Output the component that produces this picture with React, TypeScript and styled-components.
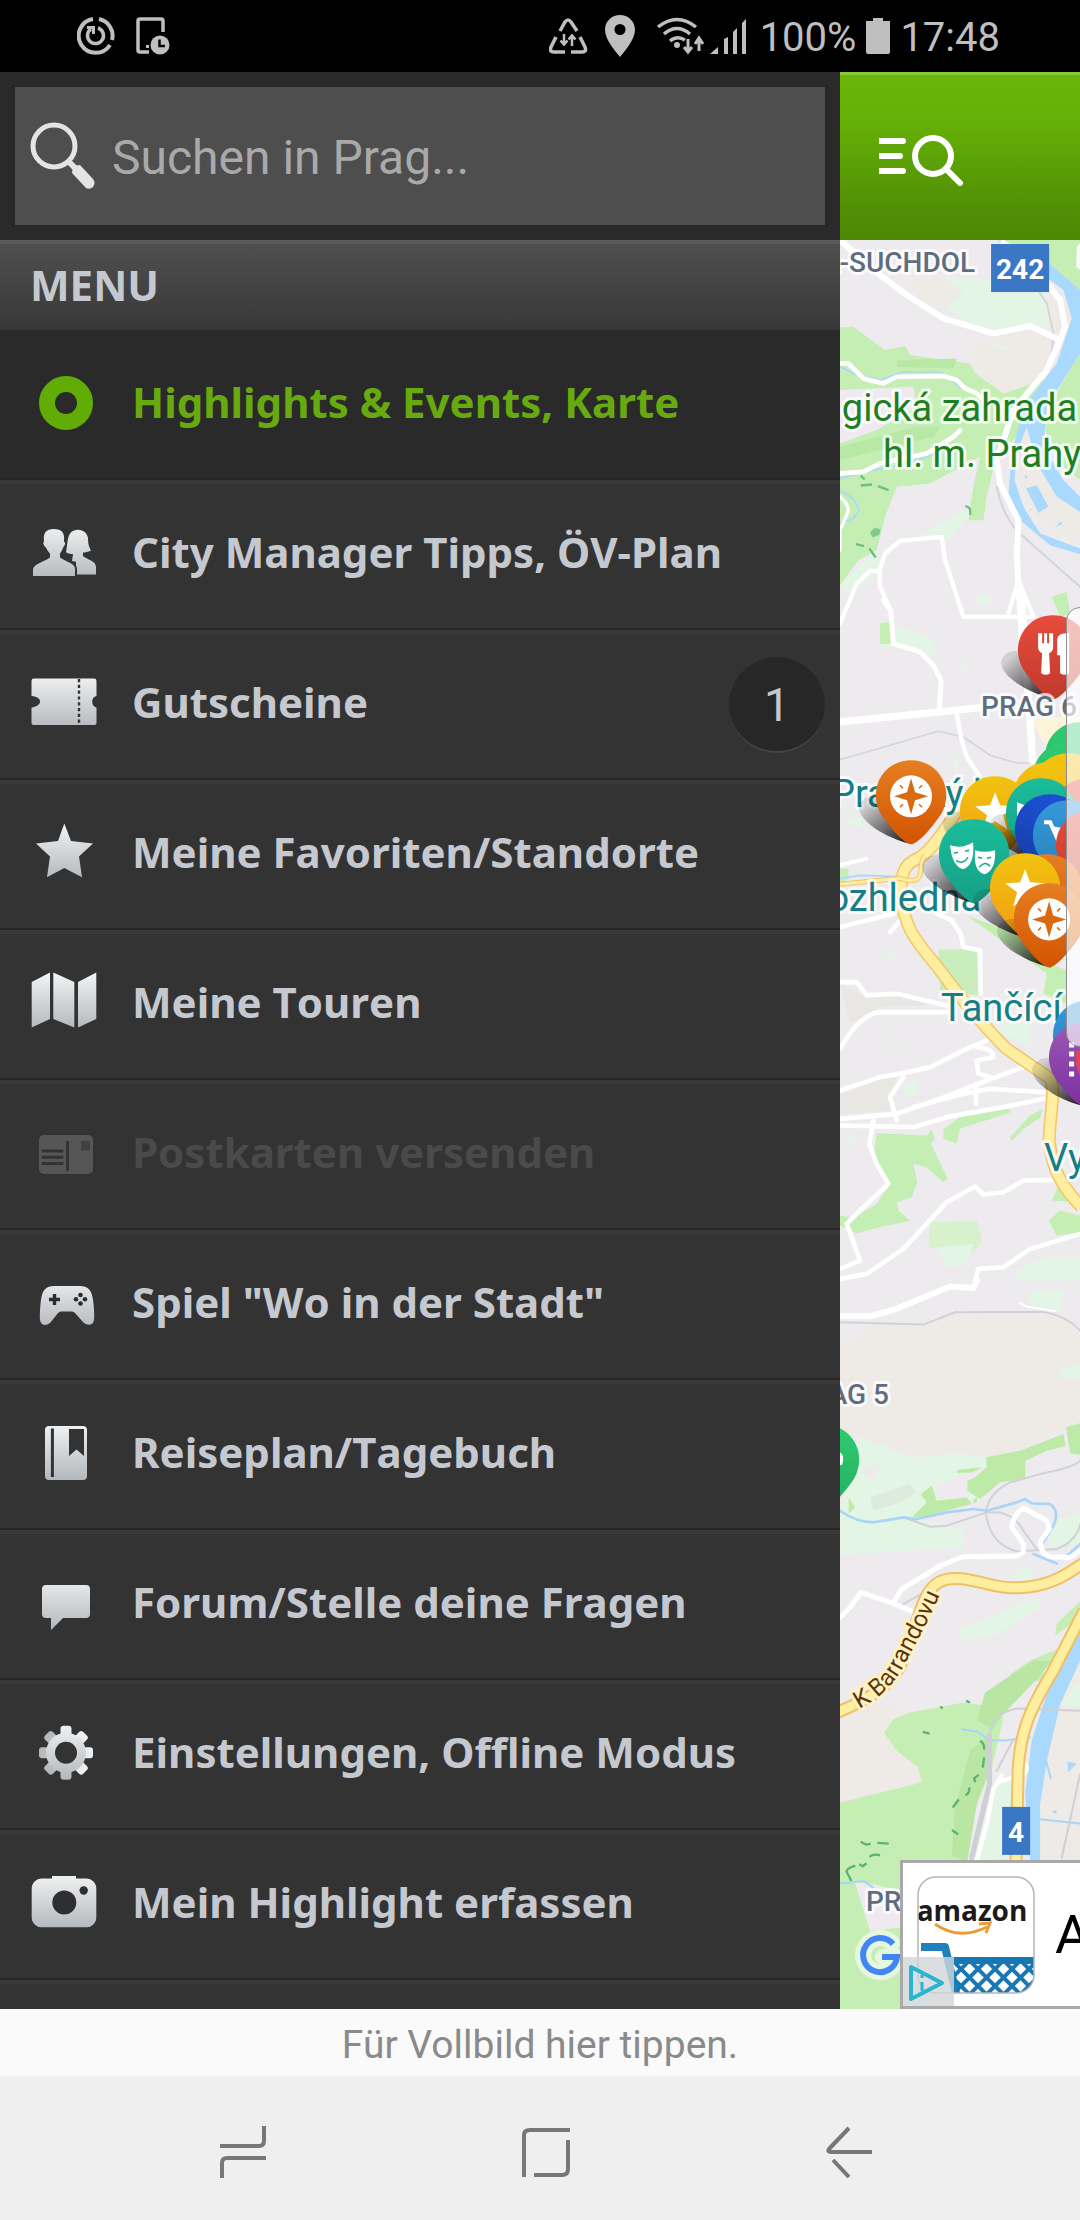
import React from "react";
import styled, { createGlobalStyle } from "styled-components";

const GlobalStyle = createGlobalStyle`
  *, *::before, *::after { box-sizing: border-box; }
  html, body { margin: 0; padding: 0; background: #000; }
  button, input { font: inherit; border: 0; margin: 0; padding: 0; background: none; color: inherit; }
`;

const uiFont = `Roboto, "Noto Sans", sans-serif`;
const menuFont = `"Noto Sans", "Open Sans", sans-serif`;

const Page = styled.div`
  display: flex;
  flex-direction: column;
  height: 100vh;
  overflow: hidden;
  font-family: ${uiFont};
`;

/* ---------- status bar ---------- */

const StatusBar = styled.header`
  flex: none;
  display: flex;
  align-items: center;
  justify-content: space-between;
  height: 72px;
  padding: 0 80px 0 77px;
  background: #000;
  color: #bfbfbf;
`;

const StatusGroup = styled.div<{ $gap: number }>`
  display: flex;
  align-items: center;
  gap: ${(p) => p.$gap}px;
`;

const StatusText = styled.span`
  padding-top: 4px;
  font-size: 40px;
  line-height: 48px;
`;

/* ---------- main area ---------- */

const Main = styled.main`
  flex: 1;
  min-height: 0;
  display: grid;
  grid-template-columns: 7fr 2fr;
`;

const Drawer = styled.aside`
  display: flex;
  flex-direction: column;
  min-width: 0;
  min-height: 0;
  overflow: hidden;
  background: #333;
`;

const SearchBar = styled.form`
  flex: none;
  height: 168px;
  padding: 15px;
  background: #2a2a2a;
`;

const SearchField = styled.label`
  display: flex;
  align-items: center;
  gap: 16px;
  height: 138px;
  padding: 0 15px;
  background: #4e4e4e;
  box-shadow: 0 0 0 2px #262626;
`;

const SearchInput = styled.input`
  flex: 1;
  min-width: 0;
  outline: none;
  color: #d8d8d8;
  font-size: 48px;
  line-height: 60px;
  && { padding-top: 4px; }
  &::placeholder { color: #a9a9a9; opacity: 1; }
`;

const MenuTitle = styled.h2`
  flex: none;
  margin: 0;
  height: 90px;
  padding: 0 30px;
  font-family: ${menuFont};
  font-size: 42px;
  font-weight: 700;
  line-height: 90px;
  color: #c5c8cf;
  background: linear-gradient(#505050, #383838);
  box-shadow: inset 0 4px 0 #5a5a5a;
`;

const MenuList = styled.ul`
  margin: 0;
  padding: 0;
  list-style: none;
`;

const MenuRow = styled.button<{ $active?: boolean; $muted?: boolean }>`
  display: flex;
  align-items: center;
  gap: 30px;
  width: 100%;
  height: 150px;
  padding: 0 15px 0 30px;
  text-align: left;
  font-family: ${menuFont};
  font-size: 42px;
  font-weight: 700;
  line-height: 60px;
  color: ${(p) => (p.$active ? "#67aa10" : p.$muted ? "#4a4a4a" : "#c5c8cf")};
  background: ${(p) => (p.$active ? "#2a2a2a" : "#333")};
  box-shadow: inset 0 -2px 0 #262626,
    inset 0 4px 0 ${(p) => (p.$active ? "#2a2a2a" : "#393939")};
`;

const RowLabel = styled.span`
  flex: 1;
  min-width: 0;
  padding-bottom: 6px;
  white-space: nowrap;
  font-kerning: none;
  font-variant-ligatures: none;
`;

const Badge = styled.span`
  flex: none;
  width: 96px;
  height: 96px;
  border-radius: 50%;
  background: #272727;
  border-bottom: 2px solid #444;
  font-family: ${uiFont};
  font-size: 46px;
  font-weight: 400;
  line-height: 96px;
  text-align: center;
`;

const Content = styled.section`
  display: flex;
  flex-direction: column;
  min-width: 0;
  min-height: 0;
`;

const AppBar = styled.div`
  flex: none;
  display: flex;
  align-items: center;
  height: 168px;
  padding: 0 36px;
  background: linear-gradient(#69b708, #65b007 30%, #4f8d05 85%, #4c8a05);
  box-shadow: inset 0 3px 0 #88c63c;
`;

const BarButton = styled.button`
  display: flex;
`;

const MapPane = styled.div`
  position: relative;
  flex: 1;
  min-height: 0;
  overflow: hidden;
  background: #eeebef;
`;

const MapSvg = styled.svg`
  display: block;
  width: 100%;
  height: 100%;
`;

const ZoomPanel = styled.div`
  position: absolute;
  left: 226px;
  right: -40px;
  top: 367px;
  height: 440px;
  border: 1px solid #8f8f8f;
  border-radius: 14px;
  background: rgba(255, 255, 255, 0.66);
`;

const AdBanner = styled.a`
  position: absolute;
  left: 60px;
  right: 0;
  bottom: 0;
  display: flex;
  align-items: center;
  gap: 20px;
  height: 149px;
  overflow: hidden;
  border: 3px solid #a9a9a9;
  border-right: 0;
  background: #fff;
  color: #000;
  text-decoration: none;
  font-size: 54px;
  line-height: 60px;
`;

const AdTile = styled.svg`
  flex: none;
  display: block;
  width: 132px;
  height: 143px;
`;

/* ---------- bottom ---------- */

const HintButton = styled.button`
  flex: none;
  height: 67px;
  background: #fafafa;
  color: #8a8a8a;
  font-size: 39px;
  line-height: 67px;
  && { padding-top: 3px; }
`;

const NavBar = styled.nav`
  flex: none;
  display: grid;
  grid-template-columns: repeat(3, 1fr);
  height: 144px;
  padding: 0 80px 0 92px;
  background: #efefef;
`;

const NavButton = styled.button`
  display: flex;
  align-items: center;
  justify-content: center;
  && { padding-top: 8px; }
`;

/* ---------- menu icons ---------- */

const MenuSvg = styled.svg`
  flex: none;
  display: block;
  width: 72px;
  height: 72px;
`;

const S = "url(#silver)";
const DARK = "#333";

const icons: Record<string, React.ReactNode> = {
  ring: <circle cx="36" cy="34" r="19" fill="none" stroke="#62ad05" strokeWidth="16" />,
  people: (
    <>
      <path fill={S} d="M46 11 C53 10 57 14 58 19 C58 25 59 28 61 31.500 C58 33 55 33.500 53 33.500 L53 37 C58 41 66 42 66 48 L66 55.500 L47 55.500 L46 48 Z" />
      <path fill={S} d="M36 33 C38 26 36 11 47 11 L53 34 L52 44 L42 42 L43 35 Q38 35 36 33 Z" />
      <path fill={S} stroke={DARK} strokeWidth="2" d="M24 9 C32 9 36 13 35 22 C37 23 36 27 34 29 C33 32 32 33 31 35 L31 38 C36 42 46 43 46 50 L46 58 L2 58 L2 50 C3 43 14 42 19 38 L19 35 C17 33 16 31 15 29 C12 27 12 23 13 22 C12 14 15 9 24 9 Z" />
    </>
  ),
  ticket: (
    <>
      <path fill={S} d="M4 9.6 H64 A2.5 2.5 0 0 1 66.5 12 V27 A6 6 0 0 0 66.5 38.5 V53.5 A2.5 2.5 0 0 1 64 56 H4 A2.5 2.5 0 0 1 1.5 53.5 V38.5 C13 37 13 28 1.5 27 V12 A2.5 2.5 0 0 1 4 9.6 Z" />
      <path stroke={DARK} strokeWidth="2.4" strokeDasharray="3.2 2.6" d="M49 10 V56" />
    </>
  ),
  star: <path fill={S} d="M34.3 4.6 L41 22 L63 24.5 L49 37.5 L52 58.2 L34.3 49 L17 58.2 L20 37.5 L6 24.5 L28 22 Z" />,
  map: (
    <path fill={S} d="M1.7 13 L20 3.4 V50 L1.7 58.5 Z M23.3 3.4 L44.3 13 V58.5 L23.3 50 Z M48 13 L66.3 3.4 V50 L48 58.5 Z" />
  ),
  postcard: (
    <>
      <rect x="9" y="16" width="54" height="39" rx="5" fill="#565656" />
      <path stroke={DARK} strokeWidth="3" d="M37.5 22 V52 M11.7 32 H33.3 M11.7 38.3 H33.3 M11.7 44.4 H33.3" />
      <rect x="51" y="22" width="9" height="9.4" fill="#414141" />
    </>
  ),
  gamepad: (
    <>
      <path fill={S} d="M24 17 H50 C58 17 61 21 62.500 28 C64 36 64.500 46 64 51 C63 57 57 57 53 53 L45 44 C44 43 43 42.500 42 42.500 H31 C30 42.500 29 43 28 44 L20 54 C16 57 11 57 10 51 C9.700 46 10 36 11.500 28 C13 21 16 17 24 17 Z" />
      <path stroke="#2c2c2c" strokeWidth="3.4" d="M19 30.500 H30 M24.500 25 V36" />
      <g fill="#2c2c2c">
        <circle cx="50.500" cy="26" r="2.300" />
        <circle cx="50.500" cy="34.500" r="2.300" />
        <circle cx="46" cy="30.300" r="2.300" />
        <circle cx="55" cy="30.300" r="2.300" />
      </g>
    </>
  ),
  book: (
    <>
      <rect x="15" y="7" width="42" height="54" rx="4" fill={S} />
      <path stroke={DARK} strokeWidth="3" d="M22.400 9.500 V58" />
      <path fill={DARK} d="M39 10 H54 V37 L46.500 30.500 L39 37 Z" />
    </>
  ),
  forum: <path fill={S} d="M16 16 H56 A4 4 0 0 1 60 20 V45 A4 4 0 0 1 56 49 H33 L21 61 V49 H16 A4 4 0 0 1 12 45 V20 A4 4 0 0 1 16 16 Z" />,
  gear: (
    <>
      <g fill={S}>
        {[0, 45, 90, 135].map((a) => (
          <rect key={a} x="30.500" y="6.800" width="11" height="54" rx="3" transform={`rotate(${a} 36 33.800)`} />
        ))}
        <circle cx="36" cy="33.800" r="20" />
      </g>
      <circle cx="36" cy="33.800" r="11" fill={DARK} />
    </>
  ),
  camera: (
    <>
      <path fill={S} d="M22 9.500 V7 H46 V9.500 H56 A10 10 0 0 1 66.300 20 V48 A10 10 0 0 1 56 58.300 H12 A10 10 0 0 1 1.700 48 V20 A10 10 0 0 1 12 9.500 Z" />
      <circle cx="34.300" cy="33.500" r="12" fill="#2f2f2f" />
      <circle cx="53.700" cy="21.500" r="4.200" fill="#2f2f2f" />
    </>
  ),
};

type Item = { icon: string; label: string; active?: boolean; muted?: boolean; badge?: number };

const items: Item[] = [
  { icon: "ring", label: "Highlights & Events, Karte", active: true },
  { icon: "people", label: "City Manager Tipps, ÖV-Plan" },
  { icon: "ticket", label: "Gutscheine", badge: 1 },
  { icon: "star", label: "Meine Favoriten/Standorte" },
  { icon: "map", label: "Meine Touren" },
  { icon: "postcard", label: "Postkarten versenden", muted: true },
  { icon: "gamepad", label: 'Spiel "Wo in der Stadt"' },
  { icon: "book", label: "Reiseplan/Tagebuch" },
  { icon: "forum", label: "Forum/Stelle deine Fragen" },
  { icon: "gear", label: "Einstellungen, Offline Modus" },
  { icon: "camera", label: "Mein Highlight erfassen" },
];

/* ---------- map ---------- */

const Label = styled.text<{ $size: number; $color: string; $weight?: number; $halo?: string }>`
  font-family: ${uiFont};
  font-size: ${(p) => p.$size}px;
  font-weight: ${(p) => p.$weight ?? 400};
  fill: ${(p) => p.$color};
  stroke: ${(p) => p.$halo ?? "rgba(255,255,255,0.75)"};
  stroke-width: ${(p) => (p.$halo === "none" ? 0 : 6)}px;
  stroke-linejoin: round;
  paint-order: stroke;
`;

const pinColors: Record<string, [string, string]> = {
  orange: ["#e67e22", "#d35400"],
  red: ["#e74c3c", "#c0392b"],
  yellow: ["#f1c40f", "#f39c12"],
  teal: ["#1abc9c", "#16a085"],
  green: ["#2ecc71", "#27ae60"],
  navy: ["#1c4fd0", "#15399f"],
  blue: ["#3498db", "#2980b9"],
  purple: ["#9b59b6", "#7d2fa0"],
};

type PinProps = { x: number; y: number; color: string; flat?: boolean; children?: React.ReactNode };

function Pin({ x, y, color, flat, children }: PinProps) {
  return (
    <g transform={`translate(${x} ${y})`}>
      {!flat && <path fill="url(#pinShadow)" d="M2 0 C-18 -3 -54 -22 -52 -38 C-49 -49 -34 -51 -28 -46 Z" />}
      <path fill={`url(#pin-${color})`} d="M0 0 C-6 0 -20 -15 -30 -30 C-44 -55 -28 -84 0 -84 C28 -84 44 -55 30 -30 C20 -15 6 0 0 0 Z" />
      {children}
    </g>
  );
}

const Compass = () => (
  <>
    <circle cy="-48" r="21" fill="#fff" />
    <path fill="#d96a12" d="M0 -66 L4 -52 L17 -48 L4 -44 L0 -30 L-4 -44 L-17 -48 L-4 -52 Z" />
    <path stroke="#d96a12" strokeWidth="1.500" d="M-11 -59 L-8 -56 M11 -59 L8 -56 M-11 -37 L-8 -40 M11 -37 L8 -40" />
  </>
);

const Star = () => (
  <path fill="#fff" d="M0 -68 L5 -55 L20 -54 L8 -45 L12 -31 L0 -39 L-12 -31 L-8 -45 L-20 -54 L-5 -55 Z" />
);

function CityMap() {
  return (
    <MapSvg viewBox="0 0 240 1768" preserveAspectRatio="xMinYMin slice" role="img" aria-label="Karte von Prag">
      <defs>
        {Object.entries(pinColors).map(([name, [a, b]]) => (
          <linearGradient key={name} id={`pin-${name}`} x1="0" y1="0" x2="0" y2="1">
            <stop offset="0" stopColor={a} />
            <stop offset="1" stopColor={b} />
          </linearGradient>
        ))}
        <linearGradient id="pinShadow" x1="0" y1="0" x2="1" y2="1">
          <stop offset="0.150" stopColor="#000" stopOpacity="0.120" />
          <stop offset="0.900" stopColor="#000" stopOpacity="0.850" />
        </linearGradient>
        <path id="barrandovu" d="M19 1468 C42 1456 55 1442 64 1425 C76 1401 87 1385 104 1344" />
      </defs>

      {/* northern district */}
      <g transform="translate(-10 0) scale(0.333333)" strokeLinecap="round" strokeLinejoin="round">
        <path fill="#e3f5e5" d="M330 110 L640 130 L660 260 L500 290 L340 200 L400 160 Z" />
        <path fill="#eeeae6" d="M240 120 L340 110 L400 160 L350 200 L270 190 Z M430 310 L560 270 L690 290 L600 470 L500 460 L430 410 Z" />
        <path fill="#e3f5e5" d="M270 885 L400 810 L420 830 L350 900 Z M30 1035 L140 930 L160 990 L60 1060 Z M455 300 L530 320 L520 330 Z M150 1140 L270 1180 L280 1220 L150 1220 Z M440 1070 L480 1065 L480 1095 L440 1090 Z" />
        <path fill="#c5eeb5" d="M30 262 L70 260 L165 330 L225 318 L240 345 L420 370 L435 400 L520 460 L640 420 L600 560 L500 640 L470 770 L460 840 L415 840 L430 740 L450 650 L300 730 L200 740 L165 830 L140 930 L85 960 L30 1035 Z" />
        <path fill="#eeeaef" d="M30 450 L250 440 L260 500 L140 570 L30 610 Z" />
        <path fill="#b9e7a6" d="M200 360 L380 355 L370 385 L200 380 Z M30 620 L260 560 L330 560 L310 590 L30 660 Z" />
        <path fill="#c5eeb5" d="M520 0 H750 V200 L660 90 L560 20 Z M750 340 L690 440 L640 560 L700 680 L750 720 Z M665 1070 L710 1055 L720 1120 L690 1130 Z M150 1150 L175 1145 L180 1210 L150 1210 Z" />
        <path fill="#eeeae6" d="M650 130 L710 190 L725 240 L705 320 L670 300 Z M585 540 L560 700 L620 830 L720 910 L750 900 L750 810 L680 750 L620 680 Z" />
        <path fill="#fafafa" d="M740 20 L750 10 V90 L738 80 Z" />
        <path fill="#a9d9fd" d="M500 0 L560 20 L610 30 L750 150 L750 340 L700 420 L650 500 L640 620 L700 720 L750 770 V815 L680 770 L620 670 L590 560 L560 640 L553 720 L580 800 L630 880 L750 925 V942 L660 915 L570 840 L535 760 L545 640 L580 500 L680 370 L725 235 L700 150 Z" />
        <path fill="#a9d9fd" d="M588 745 L620 735 L655 800 L625 818 Z M582 705 L592 708 L588 716 Z M600 805 L606 808 L602 812 Z M690 845 L696 850 L676 862 Z" />
        <g fill="none" stroke="#a9d9fd" strokeWidth="5">
          <path d="M30 380 L70 400 L150 420 L220 395 L330 395 L390 440" />
          <path d="M30 715 L130 690 L230 670 L380 620" />
          <path d="M30 750 L70 775 L88 810 L70 835 L30 850" />
        </g>
        <g fill="none" stroke="#d3d5d9" strokeWidth="6">
          <path d="M610 130 L650 190 L670 280 L660 390" />
          <path d="M500 740 Q520 840 580 890 L750 1040" />
        </g>
        <g fill="none" stroke="#fff" strokeWidth="18">
          <path d="M30 0 L130 90 L230 165 L340 235 L490 280 L600 258 L690 300 L705 260 L690 180 L650 130 L520 10" />
          <path d="M690 300 L650 390 L550 510 L500 660 L510 730 L565 840 L560 950 L575 1200" />
          <path strokeWidth="14" d="M30 370 L55 370 L100 415 L160 430 L200 410 L340 408 L380 420 L405 445 L440 460 L470 490 M30 700 L100 695 L150 670 L290 640 L370 590 L390 570" />
          <path strokeWidth="13" d="M30 1150 L80 1030 L120 992 L148 992 L165 940 L210 902 L335 890 L345 960 L400 1130 L610 1130 L565 1020 L535 1120 M148 992 L150 1040 L182 1110 L186 1200" />
          <path strokeWidth="10" d="M30 770 Q65 800 50 825 L30 870 V930" />
        </g>
        <path fill="none" stroke="#6fbf80" strokeWidth="7" strokeLinecap="butt" d="M92 736 L126 733 M144 738 L176 750 M92 706 L104 718 M78 912 L102 918 M118 925 L137 952 M406 798 Q424 800 420 824" />
        <path fill="#83c98e" d="M120 878 L134 862 L152 868 L148 884 L128 892 Z" />
      </g>

      {/* Prag 6 */}
      <g transform="translate(-10 360) scale(0.333333)" strokeLinecap="round" strokeLinejoin="round">
        <path fill="#e3f5e5" d="M180 75 L300 110 L320 160 L280 170 L200 130 Z M365 490 L390 455 L380 510 Z M30 660 L110 650 L100 680 Z M380 200 L410 185 L405 210 Z M30 600 L60 610 L40 630 Z" />
        <path fill="#c5eeb5" d="M150 70 L180 65 L186 130 L150 132 Z M30 805 L55 805 V835 L30 850 Z" />
        <path fill="#fdf3da" d="M600 350 H750 V430 L640 430 Z" />
        <g fill="none" stroke="#d3d5d9" strokeWidth="5">
          <path d="M30 478 L325 393 L400 410 L480 465 L560 488 L610 488" />
        </g>
        <g fill="none" stroke="#fff" strokeWidth="15">
          <path d="M160 0 L182 30 L190 130 L270 155 L310 195 L333 240 L328 320" />
          <path strokeWidth="22" d="M30 365 L330 335 L450 322" />
          <path strokeWidth="13" d="M380 340 L395 420 L410 470 L450 530" />
          <path strokeWidth="22" d="M575 0 L598 330 L607 480" />
          <path strokeWidth="12" d="M30 795 L110 775" />
        </g>
        <path fill="none" stroke="#a9d9fd" strokeWidth="5" d="M30 835 L90 825 L200 828" />
        <path fill="none" stroke="#f6ca6c" strokeWidth="5" d="M30 848 L180 832" />
      </g>

      {/* Smichov */}
      <g transform="translate(-10 640) scale(0.333333)" strokeLinecap="round" strokeLinejoin="round">
        <path fill="#e9e7e4" d="M30 310 L100 345 L240 350 L300 375 L150 380 L60 430 Z M30 640 L200 580 L180 690 L30 700 Z" />
        <path fill="#c9edbd" d="M325 208 L440 205 L445 345 L330 335 Z" />
        <path fill="#d8f1cd" d="M300 1025 L440 1020 L455 1080 L430 1115 L295 1100 Z" />
        <path fill="#e3f5e5" d="M320 1100 L430 1090 L410 1150 L350 1160 Z M560 1170 L640 1130 L750 1130 V1200 L560 1200 Z M210 620 L260 600 L260 640 L230 650 Z M140 220 L190 215 L200 235 Z M480 440 L600 420 L600 500 L560 480 Z M180 465 L215 480 L190 490 Z M45 765 L80 780 L60 790 Z" />
        <path fill="#c5eeb5" d="M410 105 L560 160 L660 250 L710 270 V370 L640 340 L650 280 L520 185 Z" />
        <path fill="#c5eeb5" d="M140 758 L290 765 L305 748 L315 775 L303 790 L353 895 L340 905 L290 862 L250 850 L262 905 L245 950 L200 965 L205 990 L240 1020 L150 1040 L80 1058 L30 1035 V1005 L70 1012 L140 970 L180 910 L130 830 Z" />
        <path fill="#c5eeb5" d="M340 748 L400 700 L530 675 L542 695 L390 745 L380 790 L340 775 Z M540 770 L600 705 L640 685 L630 712 L580 745 L545 782 Z M665 960 L690 905 L750 975 V965 Z M655 1020 L690 990 L750 1005 V1055 L680 1065 Z" />
        <g fill="none" stroke="#fff" strokeWidth="14">
          <path d="M30 140 L190 100 M320 100 L365 120 L392 160 L400 200 L450 210 L452 340 M180 155 L220 110" />
          <path d="M30 305 L80 305 L110 345 L200 340 L350 375 M30 505 Q90 400 150 395 L350 395" />
          <path d="M30 630 L150 590 L220 578 L300 560 L400 510 L470 480 M440 500 Q490 505 490 530 L440 540 L445 580 L480 590" />
          <path d="M220 590 L180 650 L200 720 M30 715 L200 700 L330 655 L470 600 L620 545 M30 735 L250 740 L350 710 L520 680 L640 655 M250 680 L400 640 L480 625 L640 635 M438 610 V670" />
          <path d="M130 720 L118 790 L140 850 L175 910 L100 980 L50 1030 L90 1140 L30 1165" />
          <path d="M30 1195 L110 1180 L220 1105 L350 965 L435 918 L460 942 L520 935 L580 900 L690 898 M435 1200 L445 1165 L520 1160 L600 1105 L750 1060" />
        </g>
      </g>

      {/* ring road */}
      <g fill="none" strokeLinejoin="round">
        <path stroke="#f3c566" strokeWidth="13" d="M117 570 C105 590 92 610 78 618 C60 625 62 640 60 654 C66 694 80 704 100 730 C124 762 148 790 166 808 L210 838 C216 850 210 870 209 900 C212 930 222 946 241 966" />
        <path stroke="#fdeea0" strokeWidth="10" d="M117 570 C105 590 92 610 78 618 C60 625 62 640 60 654 C66 694 80 704 100 730 C124 762 148 790 166 808 L210 838 C216 850 210 870 209 900 C212 930 222 946 241 966" />
        <path stroke="#f3c566" strokeWidth="5" d="M0 644 L60 638 C90 648 76 622 85 616" />
        <path stroke="#fdeea0" strokeWidth="3" d="M0 644 L60 638 C90 648 76 622 85 616" />
      </g>

      {/* Prag 5 */}
      <g transform="translate(-10 1040) scale(0.333333)" strokeLinecap="round" strokeLinejoin="round">
        <path fill="#eeeae6" d="M30 200 L140 130 L290 130 L375 95 L680 95 L750 150 V430 L580 500 L470 530 L300 540 L190 500 L30 460 Z" />
        <path fill="#e3f5e5" d="M90 470 L240 530 L380 520 L480 530 L440 650 L260 720 L400 745 L400 800 L30 822 V690 Z M600 30 L700 30 L690 90 L600 75 Z M690 270 L750 250 V290 L690 290 Z M380 1050 L620 950 L630 980 L500 1060 L410 1080 Z M670 720 L750 700 V790 L650 800 Z M540 890 L590 850 L620 900 Z" />
        <path fill="#eeeaef" d="M90 570 L150 545 L130 600 Z M310 620 L430 570 L470 560 L460 600 L410 650 L330 655 Z" />
        <path fill="#ddebdd" d="M120 650 L240 610 L255 635 L210 665 L130 690 Z" />
        <path fill="#bdeaa6" d="M248 708 L290 665 L272 640 L305 615 L320 660 L410 650 L425 670 L270 710 Z M412 600 L435 590 L470 560 L468 530 L570 510 L700 460 L706 497 L650 510 L586 540 L585 595 L510 605 L450 655 L412 630 Z M380 568 L455 560 L430 575 L382 577 Z M708 440 L750 428 V522 L720 518 Z M56 650 L75 680 L56 698 Z M430 655 L440 650 L442 662 L430 668 Z" />
        <path fill="#c5eeb5" d="M675 1065 L680 1030 L750 960 V1010 Z M535 1200 L540 1180 L600 1140 L680 1105 L640 1200 Z" />
        <g fill="none" stroke="#cfd2d7" strokeWidth="6">
          <path d="M30 125 L280 132 L375 95 L640 94 Q710 105 750 150" />
          <path d="M220 710 L300 738 L350 735 L470 695 L510 695 Q560 710 580 750 L620 805 M750 540 Q730 560 650 575 L540 605 Q470 640 468 700 Q480 790 560 812 L680 805 Q740 780 750 730 M220 970 L290 930" />
        </g>
        <g fill="none" stroke="#a9d5f8" strokeWidth="8">
          <path d="M30 690 Q80 725 130 725 L220 710 L260 715 L350 695 L430 685 L470 690 L560 665 L585 655 L605 668 L660 670 Q690 690 670 735 L630 800" />
          <path d="M610 820 L680 848 M705 830 L750 790" />
        </g>
        <g fill="none" stroke="#fff" strokeWidth="15">
          <path strokeWidth="18" d="M30 107 L120 107 L190 88 L360 18 L430 22 L440 0" />
          <path strokeWidth="6" d="M570 68 L590 78 L675 92" />
          <path d="M30 1010 L60 980 L92 935 L190 968 L290 1010 M190 965 L215 925 L330 855 L400 828 L560 826 L580 815 L580 790 L545 740 Q550 700 580 682 L650 720 L658 745 L632 780 Q630 820 660 828 L720 830 L750 810" />
        </g>
      </g>

      {/* southern riverside */}
      <g transform="translate(-10 1420) scale(0.333333)" strokeLinecap="round" strokeLinejoin="round">
        <path fill="#eeeae6" d="M30 150 L160 130 L240 150 L165 210 L210 270 L275 340 L275 365 L30 425 Z M640 0 H750 V600 H600 Z" />
        <path fill="#e3f5e5" d="M495 370 L545 360 V590 L450 600 L440 560 Z M690 130 L750 60 V140 Z" />
        <path fill="#c5eeb5" d="M30 425 L275 365 L265 320 L200 270 L162 215 L190 175 L240 155 L400 125 L465 135 L520 170 L485 320 L440 430 L410 600 L210 680 L210 1050 H30 Z" />
        <path fill="#b9e6a3" d="M465 95 L540 45 L610 0 H665 L630 45 L510 170 L490 205 L440 180 Z M420 270 L470 230 L480 320 L440 430 L412 600 L365 585 L375 440 Z" />
        <path fill="#eeeaef" d="M75 665 L130 670 L210 690 L210 800 L120 810 Z" />
        <path fill="#a9d9fd" d="M690 0 H750 L690 130 L650 300 L630 430 L630 600 H600 L585 400 L605 240 L650 100 Z M712 303 L740 308 L714 334 Z M666 452 L680 445 L678 460 Z" />
        <path fill="#a9d9fd" d="M690 0 L750 -160 L750 0 Z" />
        <g fill="none" stroke="#a9d5f8" strokeWidth="6">
          <path d="M395 205 L440 212 L480 238 L530 238 L600 230 M645 290 L662 352 M630 475 L750 488 M30 668 L100 660 L130 680" />
        </g>
        <g fill="none" stroke="#cfd0d6" strokeWidth="6">
          <path d="M480 220 Q480 160 560 143 L750 150 M550 235 L500 330 M750 340 L695 590" />
          <path strokeWidth="16" d="M478 225 L478 370 L425 590" />
        </g>
        <path fill="none" stroke="#fff" strokeWidth="13" d="M515 345 L490 385 L470 490 L440 600 M500 365 L545 352 Q590 345 590 320 L578 298" />
        <path fill="none" stroke="#5bb474" strokeWidth="7" strokeLinecap="butt" d="M278 213 L299 218 M330 138 L338 142 M408 120 L420 125 M450 240 Q464 248 462 266 M462 290 L458 320 M446 342 L432 352 L436 364 M418 380 Q418 400 406 403 M386 416 L368 440 M366 508 L384 520 M92 543 L108 551 L122 549 M142 546 L176 548 M118 588 Q130 578 150 583 M88 610 L98 616 L110 607 M76 614 Q40 625 54 640 L64 660" />
      </g>

      {/* main roads to the south */}
      <g fill="none" strokeLinejoin="round">
        {["#efc065", "#fdeea0"].map((stroke, i) => (
          <g key={stroke} stroke={stroke} strokeWidth={i ? 9 : 13}>
            <path d="M-4 1472 C30 1458 48 1446 60 1426 L84 1360 C92 1342 102 1336 122 1338 C150 1342 160 1350 190 1346 C215 1342 226 1334 244 1322" />
            <path d="M244 1370 L213 1430 C190 1468 180 1490 178 1530 L176 1620" />
          </g>
        ))}
      </g>

      {/* place names */}
      <Label x="135" y="32" textAnchor="end" $size={28} $weight={500} $color="#5f6e7f">A-SUCHDOL</Label>
      <rect x="151" y="4" width="58" height="48" fill="#3a78c6" />
      <Label x="180" y="39" textAnchor="middle" $size={28} $weight={700} $color="#fff" $halo="none">242</Label>
      <Label x="237" y="181" textAnchor="end" $size={38} $color="#1d7f1f">gická zahrada</Label>
      <Label x="241" y="227" textAnchor="end" $size={38} $color="#1d7f1f">hl. m. Prahy</Label>
      <Label x="-9" y="567" $size={38} $color="#157e86">Pražský hrad</Label>
      <Label x="141" y="671" textAnchor="end" $size={38} $color="#157e86">Rozhledna</Label>
      <Label x="101" y="781" $size={38} $color="#157e86">Tančící</Label>
      <Label x="204" y="930" $size={38} $color="#157e86">Vy</Label>
      <Label x="49" y="1163" textAnchor="end" $size={28} $weight={500} $color="#5f6e7f">PRAG 5</Label>
      <Label x="26" y="1670" $size={28} $weight={500} $color="#5f6e7f">PR</Label>
      <rect x="162" y="1566" width="28" height="48" fill="#3a78c6" />
      <Label x="176" y="1601" textAnchor="middle" $size={28} $weight={700} $color="#fff" $halo="none">4</Label>
      <Label $size={24} $color="#5a3508" $halo="#fff1c4">
        <textPath href="#barrandovu">K Barrandovu</textPath>
      </Label>

      {/* Google mark */}
      <path fill="none" stroke="#e6f7df" strokeWidth="16" strokeLinecap="round" d="M52 1702 A17 17 0 1 0 57 1716 H43" />
      <path fill="none" stroke="#4285f4" strokeWidth="6" d="M53 1703 A17 17 0 1 0 57 1716 H42" />

      {/* pins */}
      <Pin x={-16} y={1268} color="green">
        <path fill="none" stroke="#fff" strokeWidth="4" d="M10 -56 Q20 -56 16 -44" />
      </Pin>
      <Pin x={213} y={459} color="red">
        <path fill="#fff" d="M-15 -66 H-11 V-56 H-9 V-66 H-6 V-56 H-4 V-66 H0 V-52 Q0 -48 -4 -46 L-3 -26 Q-7 -23 -12 -26 L-11 -46 Q-15 -48 -15 -52 Z M12 -66 Q3 -66 4 -56 V-44 H7 V-26 Q12 -23 16 -26 V-66 Z" />
      </Pin>
      <Label x="141" y="476" $size={28} $weight={500} $color="#5f6e7f">PRAG 6</Label>
      <Pin x={240} y={566} color="green" flat />
      <Pin x={228} y={586} color="green" flat />
      <Pin x={228} y={597} color="yellow" flat />
      <Pin x={208} y={606} color="yellow" flat />
      <Pin x={248} y={622} color="red" flat />
      <Pin x={71} y={604} color="orange"><Compass /></Pin>
      <Pin x={155} y={620} color="yellow"><Star /></Pin>
      <Pin x={201} y={622} color="teal"><path fill="#fff" d="M-24 -60 L-14 -56 V-44 L-24 -46 Z" /></Pin>
      <Pin x={210} y={638} color="navy" />
      <Pin x={220} y={642} color="navy" flat />
      <Pin x={228} y={644} color="blue" flat>
        <path fill="none" stroke="#fff" strokeWidth="4" d="M-24 -62 H-18 L-10 -44 H6" />
        <path fill="#fff" d="M-16 -58 L8 -54 V-42 H-10 Z" />
      </Pin>
      <Pin x={251} y={654} color="red" flat />
      <Pin x={134} y={663} color="teal">
        <path fill="#fff" d="M-24 -58 Q-12 -54 -1 -61 Q1 -38 -11 -34 Q-22 -37 -24 -58 Z M1 -53 Q10 -50 21 -53 Q22 -34 11 -29 Q-1 -31 1 -53 Z" />
        <path fill="none" stroke="#17a88c" strokeWidth="1.500" d="M-20 -50 L-16 -51 M-9 -52 L-5 -53 M-18 -43 Q-11 -38 -6 -46 M4 -46 L8 -45 M13 -45 L17 -46 M5 -36 Q11 -43 16 -37" />
      </Pin>
      <Pin x={207} y={698} color="orange" />
      <Pin x={185} y={697} color="yellow"><Star /></Pin>
      <Pin x={209} y={727} color="orange"><Compass /></Pin>
      <Pin x={248} y={844} color="blue" flat />
      <Pin x={244} y={866} color="purple" />
      <path fill="#fff" d="M229 802 h5 v5 h-5 Z M229 811 h5 v5 h-5 Z M229 821 h5 v5 h-5 Z M229 831 h5 v5 h-5 Z" />
      <path fill="#e0435a" d="M236 810 H240 V836 Q234 824 236 810 Z" />
    </MapSvg>
  );
}

const AdLogo = () => (
  <AdTile viewBox="0 0 132 143" aria-hidden="true">
    <defs>
      <clipPath id="adTile"><rect x="15" y="14" width="116" height="116" rx="18" /></clipPath>
      <pattern id="net" width="17" height="17" patternUnits="userSpaceOnUse" patternTransform="translate(7 4)">
        <path d="M-2 -2 L19 19 M19 -2 L-2 19" stroke="#1878b4" strokeWidth="4" />
      </pattern>
    </defs>
    <g clipPath="url(#adTile)">
      <path fill="none" stroke="#1f80bd" strokeWidth="8" strokeLinejoin="round" d="M18 84 H42 L54 134" />
      <path fill="url(#net)" d="M48 94 H131 V132 H54 Z" />
      <rect x="46" y="94" width="85" height="7" fill="#1878b4" />
    </g>
    <text x="69" y="58" textAnchor="middle" fontFamily='"Open Sans", sans-serif' fontWeight="700" fontSize="28" fill="#1c1a1b">amazon</text>
    <path fill="none" stroke="#f09a36" strokeWidth="3" d="M32 61 Q56 78 84 64 M76 61 L87 60 L83 70" />
    <rect x="15" y="14" width="116" height="116" rx="18" fill="none" stroke="#b5b5b5" strokeWidth="1.500" />
    <rect x="0" y="94" width="51" height="49" fill="#d2d6d9" fillOpacity="0.800" />
    <path fill="none" stroke="#27b5cf" strokeWidth="4" strokeLinejoin="round" d="M8 104 L39 120 L8 136 Z" />
    <path stroke="#27b5cf" strokeWidth="3" d="M19 119 V128 M19 112 V115" />
  </AdTile>
);

/* ---------- page ---------- */

export default function App() {
  return (
    <Page>
      <GlobalStyle />
      <svg width="0" height="0" style={{ position: "absolute" }} aria-hidden="true">
        <defs>
          <linearGradient id="silver" gradientUnits="userSpaceOnUse" x1="0" y1="5" x2="0" y2="60">
            <stop offset="0" stopColor="#f1f3f4" />
            <stop offset="1" stopColor="#b4b8bc" />
          </linearGradient>
        </defs>
      </svg>

      <StatusBar>
        <StatusGroup $gap={21}>
          <svg width="38" height="40" viewBox="0 0 38 40" fill="none" stroke="#bfbfbf" strokeWidth="4" aria-hidden="true">
            <path d="M16 3 A17 17 0 1 0 33 29 M22 3 A17 17 0 0 1 35 24" />
            <path strokeWidth="3.500" d="M21 12 A8 8 0 1 1 14 13" />
            <path strokeWidth="3" d="M10 11.500 H16.500 V18" />
          </svg>
          <svg width="34" height="38" viewBox="0 0 34 38" aria-hidden="true">
            <path fill="none" stroke="#bfbfbf" strokeWidth="3.500" d="M27 15 V4 Q27 2 25 2 H4 Q2 2 2 4 V33 Q2 35 4 35 H13" />
            <rect x="10" y="28" width="3" height="3" fill="#bfbfbf" />
            <circle cx="24" cy="28" r="9.500" fill="#bfbfbf" />
            <path fill="none" stroke="#000" strokeWidth="2.500" d="M23.500 22.500 V29 H29" />
          </svg>
        </StatusGroup>
        <StatusGroup $gap={14}>
          <svg width="42" height="36" viewBox="0 0 42 36" fill="none" stroke="#bfbfbf" strokeWidth="3.500" aria-hidden="true">
            <path d="M11 13 L16 4 Q19 0 22 4 L28 13 M7 19 L2 29 Q0 34 5 34 H16 M31 19 L36 29 Q38 34 33 34 H22" />
            <path strokeWidth="2.500" d="M15 16 V26 M11.500 22.500 L15 26.500 L18.500 22.500 M23 28 V18 M19.500 21.500 L23 17.500 L26.500 21.500" />
          </svg>
          <svg width="38" height="44" viewBox="0 0 38 44" aria-hidden="true">
            <path fill="#bfbfbf" fillRule="evenodd" d="M15 1 C23 1 30 7 30 16 C30 25 20 37 15 43 C10 37 0 25 0 16 C0 7 7 1 15 1 Z M15 10 A5.500 5.500 0 1 0 15 21 A5.500 5.500 0 1 0 15 10 Z" />
          </svg>
          <svg width="89" height="38" viewBox="0 0 89 38" aria-hidden="true">
            <g fill="none" stroke="#bfbfbf" strokeWidth="3.500">
              <path d="M1 10 Q20 -5 39 10 M7 17 Q20 6 33 17 M13 24 Q20 18 28 23" />
              <path strokeWidth="3" d="M31 22 V34 M27 30 L31 35 L35 30 M42 34 V22 M38 27 L42 21 L46 27" />
            </g>
            <circle cx="20" cy="28" r="3" fill="#bfbfbf" />
            <path fill="#bfbfbf" d="M53 37 L61 30 V37 Z M67 37 V22 L71 20 V37 Z M76 37 V15 L80 11 V37 Z M85 37 V6 L89 2 V37 Z" />
          </svg>
          <StatusGroup $gap={10}>
            <StatusText>100%</StatusText>
            <svg width="24" height="36" viewBox="0 0 24 36" aria-hidden="true">
              <path fill="#bfbfbf" d="M7 0 H17 V3 H24 V34 Q24 36 22 36 H2 Q0 36 0 34 V3 H7 Z" />
            </svg>
            <StatusText>17:48</StatusText>
          </StatusGroup>
        </StatusGroup>
      </StatusBar>

      <Main>
        <Drawer>
          <SearchBar onSubmit={(e) => e.preventDefault()}>
            <SearchField>
              <svg width="66" height="68" viewBox="0 0 66 68" aria-hidden="true">
                <circle cx="24" cy="24" r="21" fill="none" stroke="#e4e4e4" strokeWidth="5" />
                <path stroke="#e4e4e4" strokeWidth="6" d="M38 39 L46 47" />
                <path fill="#e4e4e4" d="M43 44 L50 43 L63 57 Q66 61 63 65 Q60 68 56 66 L42 51 Z" />
              </svg>
              <SearchInput type="text" placeholder="Suchen in Prag..." aria-label="Suchen in Prag" />
            </SearchField>
          </SearchBar>
          <MenuTitle>MENU</MenuTitle>
          <MenuList>
            {items.map((it) => (
              <li key={it.label}>
                <MenuRow type="button" $active={it.active} $muted={it.muted} disabled={it.muted}>
                  <MenuSvg viewBox="0 0 72 72" fill="none" aria-hidden="true">{icons[it.icon]}</MenuSvg>
                  <RowLabel>{it.label}</RowLabel>
                  {it.badge !== undefined && <Badge>{it.badge}</Badge>}
                </MenuRow>
              </li>
            ))}
            <li aria-hidden="true">
              <MenuRow as="div" />
            </li>
          </MenuList>
        </Drawer>

        <Content>
          <AppBar>
            <BarButton type="button" aria-label="Menü und Suche">
              <svg width="92" height="64" viewBox="0 0 92 64" fill="none" stroke="#fff" aria-hidden="true">
                <path strokeWidth="6" d="M3 17 H27 M3 32 H24 M3 47 H27" />
                <path strokeWidth="6" strokeLinecap="round" d="M26 17 H27 M23 32 H24 M26 47 H27 M70 45 L84 59" />
                <circle cx="57" cy="32" r="18" strokeWidth="6" />
              </svg>
            </BarButton>
          </AppBar>
          <MapPane>
            <CityMap />
            <ZoomPanel />
            <AdBanner href="#anzeige" aria-label="Anzeige">
              <AdLogo />
              <span>A</span>
            </AdBanner>
          </MapPane>
        </Content>
      </Main>

      <HintButton type="button">Für Vollbild hier tippen.</HintButton>

      <NavBar>
        <NavButton type="button" aria-label="Letzte Apps">
          <svg width="46" height="54" viewBox="0 0 46 54" fill="none" stroke="#777" strokeWidth="4">
            <path d="M44 1 V16 Q44 21 39 21 H0 M2 53 V38 Q2 33 7 33 H46" />
          </svg>
        </NavButton>
        <NavButton type="button" aria-label="Startbildschirm">
          <svg width="48" height="50" viewBox="0 0 48 50" fill="none" stroke="#777" strokeWidth="4">
            <path d="M2 50 V8 Q2 3 8 3 H48 M46 13 V42 Q46 48 40 48 H12" />
          </svg>
        </NavButton>
        <NavButton type="button" aria-label="Zurück">
          <svg width="46" height="52" viewBox="0 0 46 52" fill="none" stroke="#777" strokeWidth="4" strokeLinejoin="round">
            <path d="M23 2 L3 23 Q1 26 5 26 H46 M7 34 L23 51" />
          </svg>
        </NavButton>
      </NavBar>
    </Page>
  );
}
